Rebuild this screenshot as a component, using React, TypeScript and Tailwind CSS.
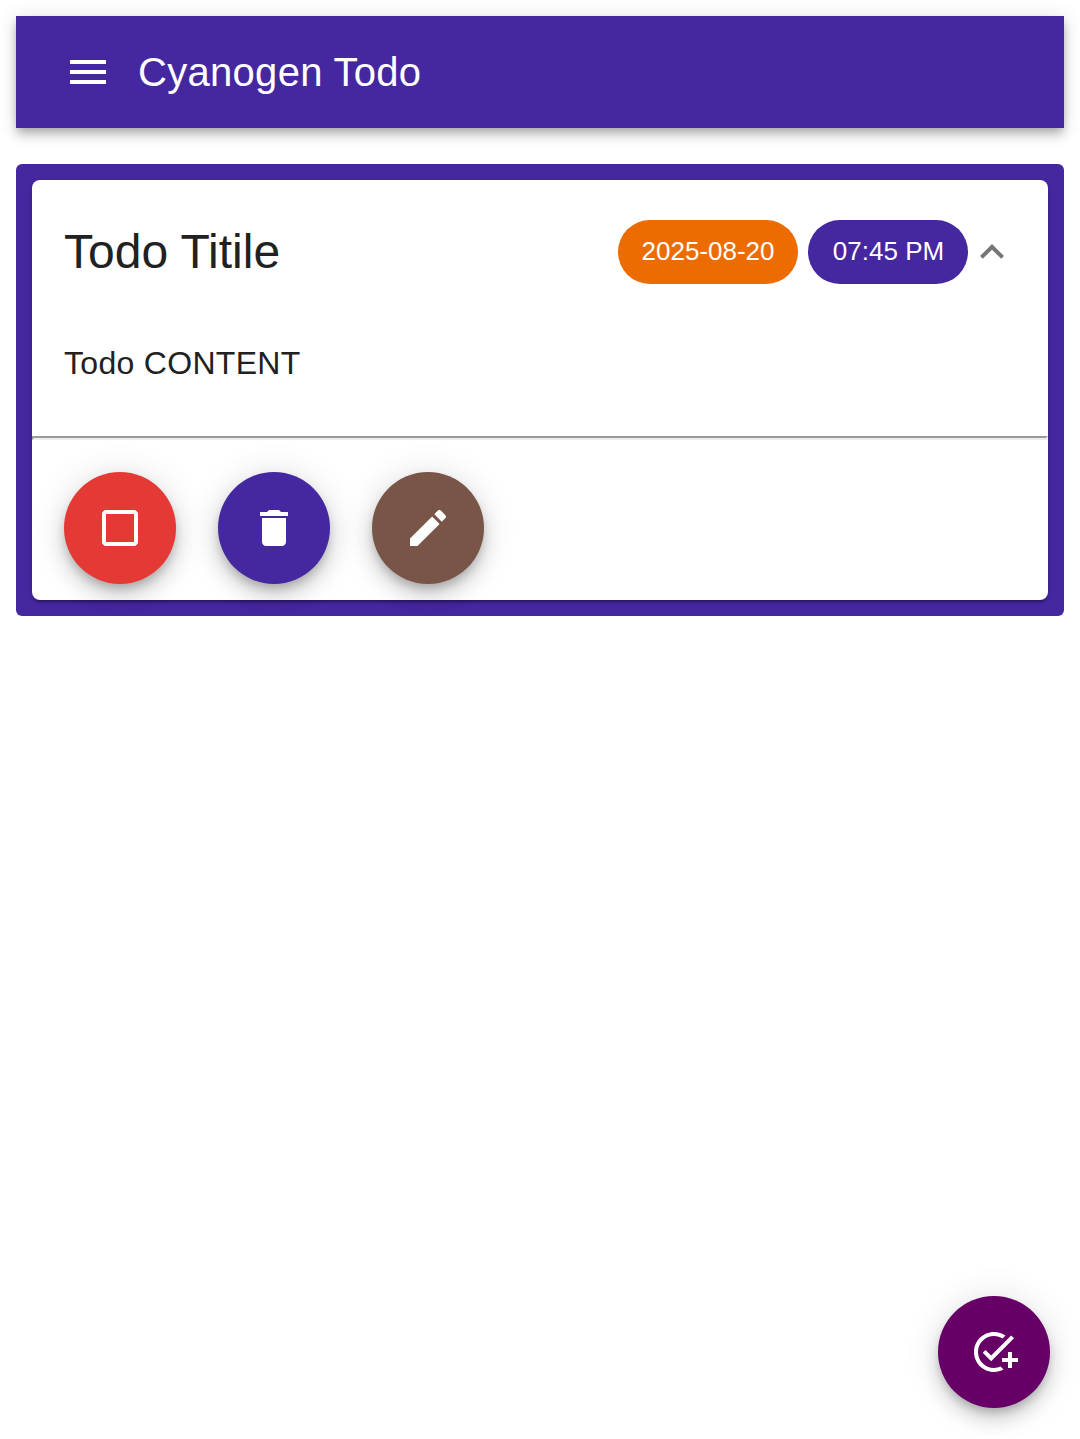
import type { ReactNode } from 'react';

const fabShadow =
  'shadow-[0_6px_10px_-2px_rgba(0,0,0,0.2),0_12px_20px_0_rgba(0,0,0,0.14),0_2px_36px_0_rgba(0,0,0,0.12)]';

function Icon({ d, className = 'size-12' }: { d: string; className?: string }) {
  return (
    <svg viewBox="0 0 24 24" fill="currentColor" className={`${className} shrink-0`} aria-hidden="true">
      <path d={d} />
    </svg>
  );
}

function Fab({ label, color, children }: { label: string; color: string; children: ReactNode }) {
  return (
    <button
      aria-label={label}
      className={`flex size-28 items-center justify-center rounded-full text-white ${color} ${fabShadow}`}
    >
      {children}
    </button>
  );
}

function Chip({ color, children }: { color: string; children: ReactNode }) {
  return (
    <span
      className={`flex h-16 items-center justify-center rounded-full pb-0.5 text-[26px] whitespace-nowrap text-white ${color}`}
    >
      {children}
    </span>
  );
}

export default function App() {
  return (
    <div className="min-h-screen bg-white p-4 font-['Liberation_Sans',Arial,sans-serif] text-[#212121]">
      <header className="flex h-28 items-center bg-[#4527a0] pl-12 text-white shadow-[0_4px_8px_-2px_rgba(0,0,0,0.2),0_8px_10px_0_rgba(0,0,0,0.14),0_2px_20px_0_rgba(0,0,0,0.12)]">
        <button aria-label="Menu" className="mr-[26px]">
          <Icon d="M3 18h18v-2H3v2zm0-5h18v-2H3v2zm0-7v2h18V6H3z" />
        </button>
        <h1 className="text-[40px] leading-[64px] tracking-[0.0075em]">Cyanogen Todo</h1>
      </header>

      <main className="mt-9 rounded-md bg-[#4527a0] p-4">
        <article className="rounded-lg bg-white shadow-[0_4px_2px_-2px_rgba(0,0,0,0.2),0_2px_2px_0_rgba(0,0,0,0.14),0_2px_6px_0_rgba(0,0,0,0.12)]">
          <div className="flex h-36 items-center pr-8 pl-8">
            <h2 className="flex-1 text-[48px] leading-[64px]">Todo Titile</h2>
            <div className="flex items-center">
              <Chip color="bg-[#ed6c02] w-[180px]">2025-08-20</Chip>
              <Chip color="bg-[#4527a0] w-40 ml-2.5 pl-px">07:45 PM</Chip>
              <button aria-label="Collapse" className="text-[#757575]">
                <Icon d="m12 8-6 6 1.41 1.41L12 10.83l4.59 4.58L18 14z" />
              </button>
            </div>
          </div>
          <p className="h-28 px-8 pt-[15px] text-[32px] leading-[48px] tracking-[0.00938em]">Todo CONTENT</p>
          <hr className="h-1 border-2 border-t-[#9a9a9a] border-r-[#eeeeee] border-b-[#eeeeee] border-l-[#9a9a9a]" />
          <div className="flex gap-[42px] px-8 pt-8 pb-4">
            <Fab label="Mark done" color="bg-[#e53935]">
              <Icon d="M19 5v14H5V5h14m0-2H5c-1.1 0-2 .9-2 2v14c0 1.1.9 2 2 2h14c1.1 0 2-.9 2-2V5c0-1.1-.9-2-2-2z" />
            </Fab>
            <Fab label="Delete" color="bg-[#4527a0]">
              <Icon d="M6 19c0 1.1.9 2 2 2h8c1.1 0 2-.9 2-2V7H6v12zM19 4h-3.5l-1-1h-5l-1 1H5v2h14V4z" />
            </Fab>
            <Fab label="Edit" color="bg-[#795548]">
              <Icon d="M3 17.25V21h3.75L17.81 9.94l-3.75-3.75L3 17.25zM20.71 7.04c.39-.39.39-1.02 0-1.41l-2.34-2.34a.9959.9959 0 0 0-1.41 0l-1.83 1.83 3.75 3.75 1.83-1.83z" />
            </Fab>
          </div>
        </article>
      </main>

      <div className="fixed right-[30px] bottom-[31px]">
        <Fab label="Add todo" color="bg-[#660066]">
          <Icon d="M22 5.18 10.59 16.6l-4.24-4.24 1.41-1.41 2.83 2.83 10-10L22 5.18zM12 20c-4.41 0-8-3.59-8-8s3.59-8 8-8c1.57 0 3.04.46 4.28 1.25l1.45-1.45C16.1 2.67 14.13 2 12 2 6.48 2 2 6.48 2 12s4.48 10 10 10c1.73 0 3.36-.44 4.78-1.22l-1.5-1.5c-1 .46-2.11.72-3.28.72zm7-5h-3v2h3v3h2v-3h3v-2h-3v-3h-2v3z" />
        </Fab>
      </div>
    </div>
  );
}
